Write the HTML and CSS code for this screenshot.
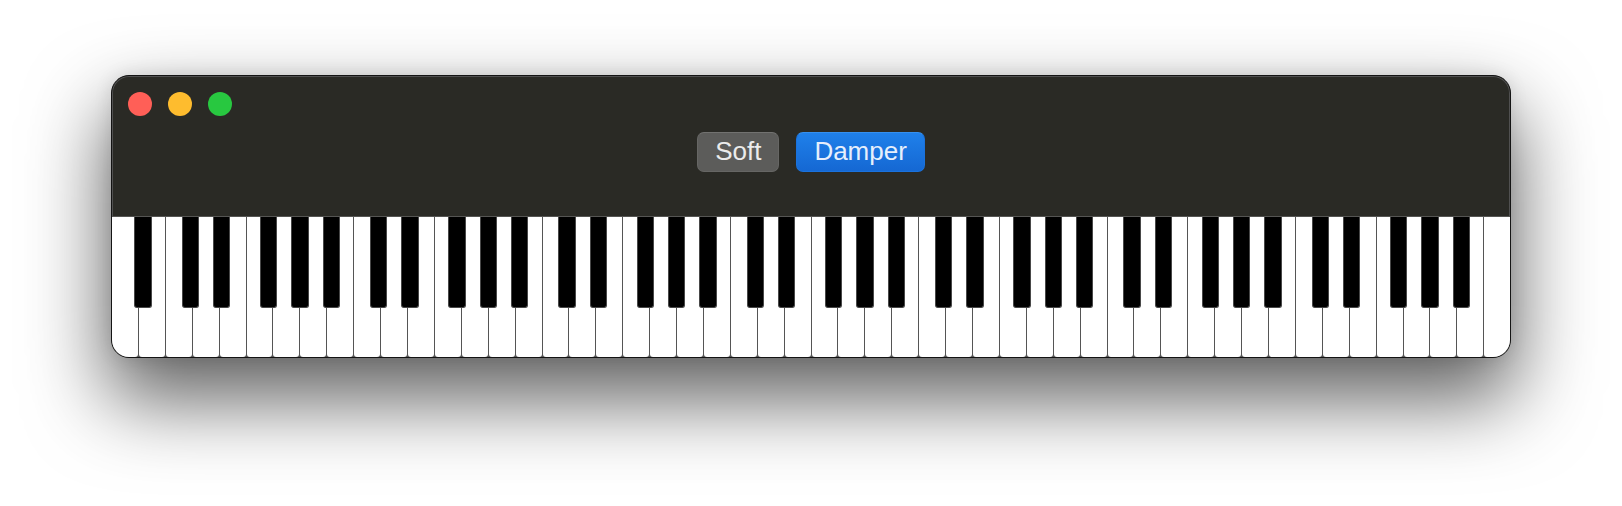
FILE: index.html
```html
<!DOCTYPE html>
<html>
<head>
<meta charset="utf-8">
<title>Piano</title>
<link rel="stylesheet" href="styles.css">
</head>
<body>
<div class="window">
  <div class="titlebar">
    <div class="lights">
      <span class="light red"></span>
      <span class="light yellow"></span>
      <span class="light green"></span>
    </div>
    <div class="controls">
      <button class="btn soft">Soft</button>
      <button class="btn damper">Damper</button>
    </div>
  </div>
  <div class="keyboard">
    <div class="w"><i class="b as"></i></div><div class="w"></div>
    <div class="w"><i class="b cs"></i></div><div class="w"><i class="b ds"></i></div><div class="w"></div><div class="w"><i class="b fs"></i></div><div class="w"><i class="b gs"></i></div><div class="w"><i class="b as"></i></div><div class="w"></div>
    <div class="w"><i class="b cs"></i></div><div class="w"><i class="b ds"></i></div><div class="w"></div><div class="w"><i class="b fs"></i></div><div class="w"><i class="b gs"></i></div><div class="w"><i class="b as"></i></div><div class="w"></div>
    <div class="w"><i class="b cs"></i></div><div class="w"><i class="b ds"></i></div><div class="w"></div><div class="w"><i class="b fs"></i></div><div class="w"><i class="b gs"></i></div><div class="w"><i class="b as"></i></div><div class="w"></div>
    <div class="w"><i class="b cs"></i></div><div class="w"><i class="b ds"></i></div><div class="w"></div><div class="w"><i class="b fs"></i></div><div class="w"><i class="b gs"></i></div><div class="w"><i class="b as"></i></div><div class="w"></div>
    <div class="w"><i class="b cs"></i></div><div class="w"><i class="b ds"></i></div><div class="w"></div><div class="w"><i class="b fs"></i></div><div class="w"><i class="b gs"></i></div><div class="w"><i class="b as"></i></div><div class="w"></div>
    <div class="w"><i class="b cs"></i></div><div class="w"><i class="b ds"></i></div><div class="w"></div><div class="w"><i class="b fs"></i></div><div class="w"><i class="b gs"></i></div><div class="w"><i class="b as"></i></div><div class="w"></div>
    <div class="w"><i class="b cs"></i></div><div class="w"><i class="b ds"></i></div><div class="w"></div><div class="w"><i class="b fs"></i></div><div class="w"><i class="b gs"></i></div><div class="w"><i class="b as"></i></div><div class="w"></div>
    <div class="w"></div>
  </div>
</div>
</body>
</html>
```

FILE: styles.css
```css
html {
  margin: 0;
  padding: 0;
  background: #ffffff;
}

body {
  margin: 0;
  min-height: 506px;
  box-sizing: border-box;
  padding: 75px 0 0 111px;
  font-family: "Liberation Sans", Arial, sans-serif;
}

.window {
  width: 1400px;
  box-sizing: border-box;
  border: 1px solid #141414;
  border-radius: 18px;
  overflow: hidden;
  background: #2a2a25;
  box-shadow: inset 0 0 0 1px #505050, 0 38px 80px 4px rgba(0, 0, 0, 0.62), 0 0 18px rgba(0, 0, 0, 0.10);
}

.titlebar {
  height: 141px;
  box-sizing: border-box;
  border-bottom: 1px solid #555553;
  display: flex;
  flex-direction: column;
  gap: 16px;
  padding: 16px 0 0 16px;
}

.lights {
  display: flex;
  gap: 16px;
}

.light {
  width: 24px;
  height: 24px;
  border-radius: 50%;
}

.red { background: #ff5f57; }
.yellow { background: #febc2e; }
.green { background: #28c840; }

.controls {
  display: flex;
  justify-content: center;
  gap: 17px;
  margin-left: -16px;
}

.btn {
  height: 40px;
  box-sizing: border-box;
  padding: 0 17px 2px;
  line-height: 36px;
  font-family: "Liberation Sans", Arial, sans-serif;
  font-size: 26px;
  border-radius: 7px;
  cursor: default;
}

.soft {
  background: #5c5c5a;
  border: 1px solid #666664;
  border-top-color: #727270;
  color: #ebebeb;
}

.damper {
  background: linear-gradient(#1f80ea, #1568d3);
  border: 1px solid #1a72dd;
  border-top-color: #3590f0;
  color: #e6effc;
}

.keyboard {
  height: 140px;
  display: flex;
  gap: 1px;
  background: #555555;
}

.w {
  flex: 1;
  position: relative;
  background: #ffffff;
  border-radius: 0 0 3px 3px;
}

.b {
  position: absolute;
  top: 0;
  z-index: 1;
  width: calc((100% + 1px) * 0.645);
  height: 91px;
  box-sizing: border-box;
  background: #000000;
  border: 1px solid #484848;
  border-top: none;
  border-radius: 0 0 3px 3px;
}

.cs { left: calc((100% + 1px) * 0.5833); }
.ds { left: calc((100% + 1px) * 0.75); }
.fs { left: calc((100% + 1px) * 0.5); }
.gs { left: calc((100% + 1px) * 0.6667); }
.as { left: calc((100% + 1px) * 0.8333); }
```
